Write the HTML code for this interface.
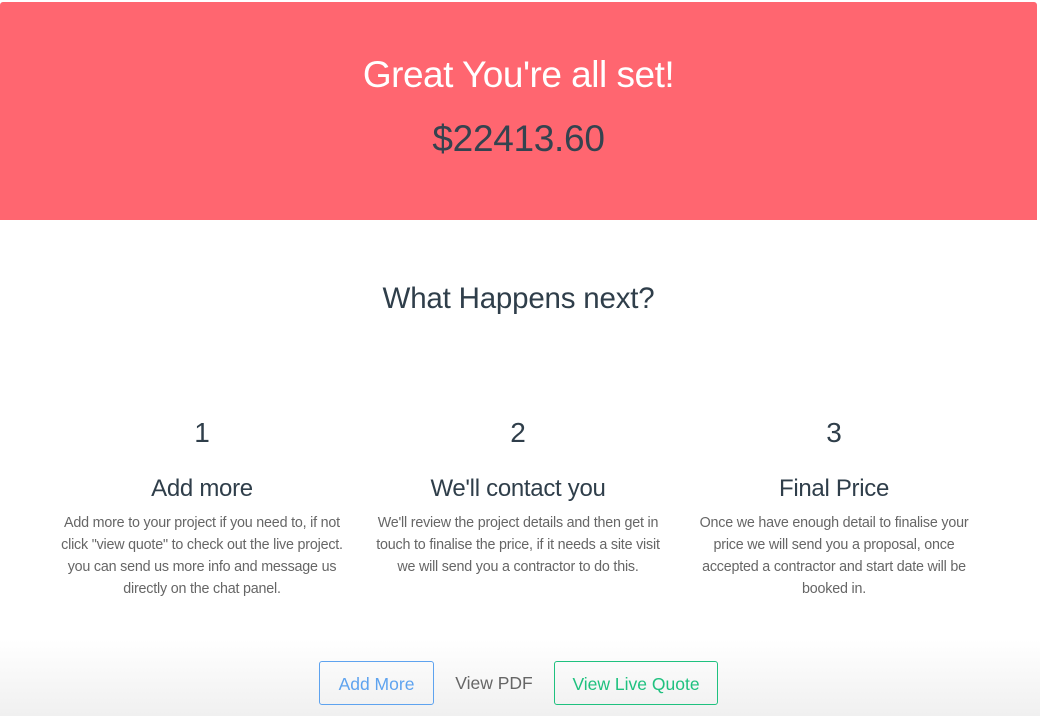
<!DOCTYPE html>
<html><head><style>
body{margin:0;width:1040px;height:716px;overflow:hidden;font-family:"Liberation Sans",sans-serif;background:linear-gradient(#fff 0,#fff 640px,#f0f0f0 716px);color:#2f3e4a;position:relative}
.banner{position:absolute;left:0;top:2px;width:1037px;height:218px;background:#ff6670;border-radius:3px 3px 0 0;text-align:center}
.banner h1{margin:0;position:absolute;top:52px;width:100%;font-weight:normal;font-size:37px;color:#fff;letter-spacing:-0.5px}
.banner .p{position:absolute;top:116px;width:100%;font-size:37px;color:#34434f;letter-spacing:-0.3px}
h2{position:absolute;top:282px;width:1037px;text-align:center;margin:0;font-weight:normal;font-size:29.5px;letter-spacing:-0.2px}
.col{position:absolute;top:415px;width:316px;text-align:center}
.n{font-size:28px;height:56px;line-height:36px}
.t{font-size:24px;line-height:36px;height:36px;letter-spacing:-0.3px}
.d{font-size:14.3px;line-height:22px;color:#666;letter-spacing:-0.2px;margin-top:5px;white-space:nowrap}
.btn{position:absolute;top:661px;height:44px;line-height:44px;font-size:17.5px;text-align:center;box-sizing:border-box;border-radius:3px}
</style></head><body>
<div class="banner"><h1>Great You're all set!</h1><div class="p">$22413.60</div></div>
<h2>What Happens next?</h2>
<div class="col" style="left:44px"><div class="n">1</div><div class="t">Add more</div><div class="d">Add more to your project if you need to, if not<br>click "view quote" to check out the live project.<br>you can send us more info and message us<br>directly on the chat panel.</div></div>
<div class="col" style="left:360px"><div class="n">2</div><div class="t">We'll contact you</div><div class="d">We'll review the project details and then get in<br>touch to finalise the price, if it needs a site visit<br>we will send you a contractor to do this.</div></div>
<div class="col" style="left:676px"><div class="n">3</div><div class="t">Final Price</div><div class="d">Once we have enough detail to finalise your<br>price we will send you a proposal, once<br>accepted a contractor and start date will be<br>booked in.</div></div>
<div class="btn" style="left:319px;width:115px;border:1px solid #5ea3ef;color:#5ea3ef">Add More</div>
<div class="btn" style="left:440px;width:108px;color:#666">View PDF</div>
<div class="btn" style="left:554px;width:164px;border:1px solid #1fc17f;color:#1fc17f">View Live Quote</div>
</body></html>
